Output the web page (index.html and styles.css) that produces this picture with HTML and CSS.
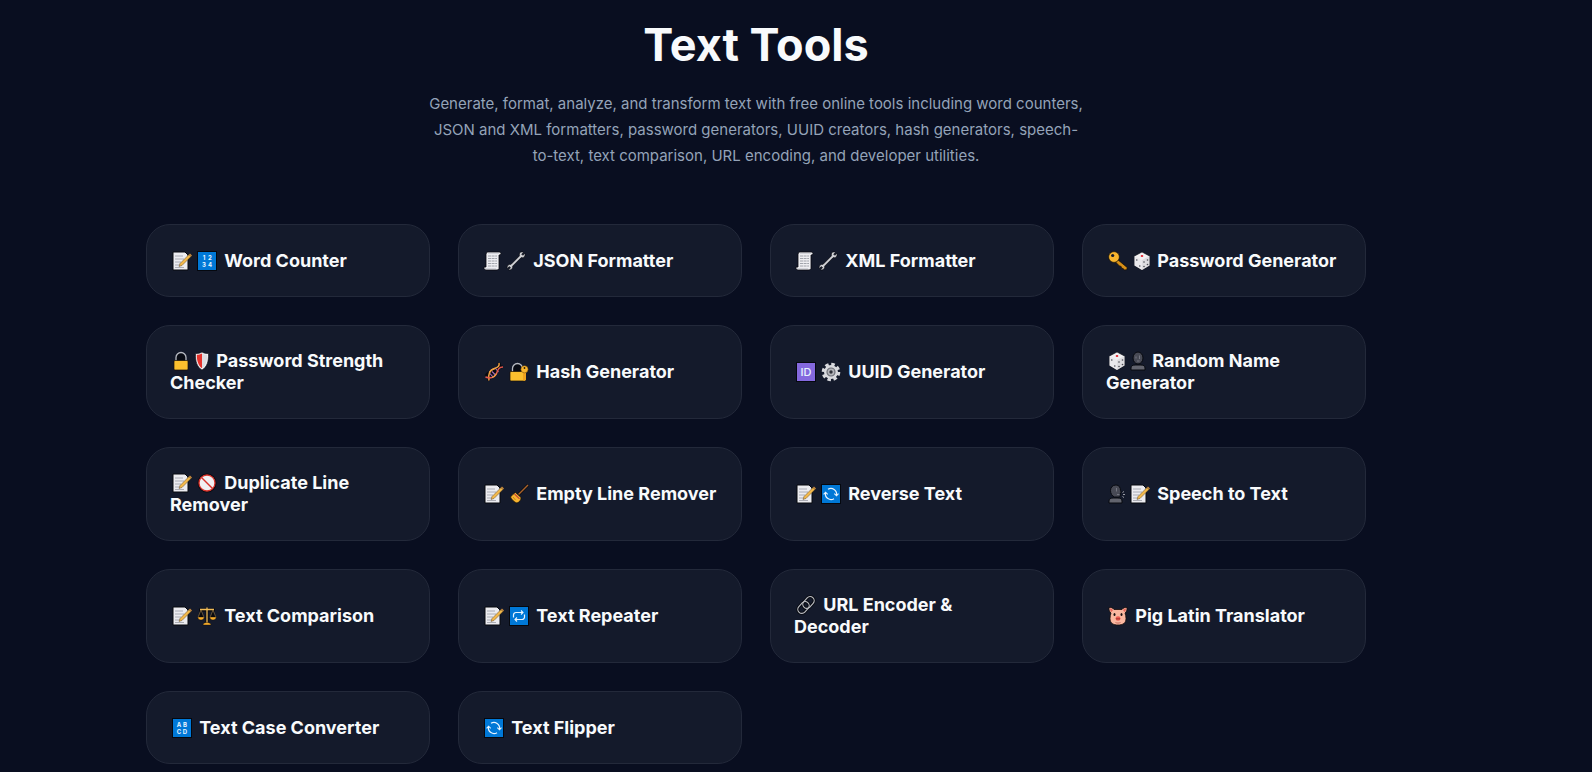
FILE: index.html
```html
<!DOCTYPE html>
<html lang="en">
<head>
    <meta charset="UTF-8">
    <meta name="viewport" content="width=device-width, initial-scale=1.0">
    <title>Text Tools</title>
    <link rel="stylesheet" href="styles.css">
</head>
<body>
    <!-- Icon sprite -->
    <svg class="sprite" aria-hidden="true">
        <symbol id="note" viewBox="0 0 20 20">
            <path d="M1 1h12l3 3v15H1z" fill="#ececf0" stroke="#07090f"/>
            <path d="M3 5h8M3 8h9M3 11h6M3 14h5M3 16.500h9" stroke="#9a9ca5" stroke-width=".8"/>
            <path d="M7 15.500l1-3L17 3.500l2 2L10 14.500z" fill="#f2b84b" stroke="#3a2c14" stroke-width=".4"/>
            <path d="M17 3.500l1-1 2 2-1 1z" fill="#c98a3d"/>
        </symbol>
        <symbol id="numbers" viewBox="0 0 20 20">
            <rect x=".5" y=".5" width="19" height="19" fill="#0078d7" stroke="#05080f"/>
            <text class="glyph" x="7" y="9">1</text>
            <text class="glyph" x="13" y="9">2</text>
            <text class="glyph" x="7" y="16">3</text>
            <text class="glyph" x="13" y="16">4</text>
        </symbol>
        <symbol id="letters" viewBox="0 0 20 20">
            <rect x=".5" y=".5" width="19" height="19" fill="#0078d7" stroke="#05080f"/>
            <text class="glyph" x="7" y="9">A</text>
            <text class="glyph" x="13" y="9">B</text>
            <text class="glyph" x="7" y="16">C</text>
            <text class="glyph" x="13" y="16">D</text>
        </symbol>
        <symbol id="id" viewBox="0 0 20 20">
            <rect x=".5" y=".5" width="19" height="19" fill="#8469de" stroke="#05080f"/>
            <text class="glyph glyph-id" x="10" y="14">ID</text>
        </symbol>
        <symbol id="refresh" viewBox="0 0 20 20">
            <rect x=".5" y=".5" width="19" height="19" fill="#0078d7" stroke="#05080f"/>
            <path d="M7 5.300a5.600 5.600 0 0 1 8.500 5.700M13 14.700a5.600 5.600 0 0 1-8.500-5.700" fill="none" stroke="#e8f4ff" stroke-width="1.200"/>
            <path d="M13.300 9.700l2.200 2 2-2M2.600 10.300l2-2 2.100 2" fill="none" stroke="#e8f4ff" stroke-width="1.100"/>
        </symbol>
        <symbol id="repeat" viewBox="0 0 20 20">
            <rect x=".5" y=".5" width="19" height="19" fill="#0078d7" stroke="#05080f"/>
            <path d="M4.500 11.500V9a2.500 2.500 0 0 1 2.500-2.500h7M15.500 8.500V11a2.500 2.500 0 0 1-2.500 2.500H6" fill="none" stroke="#e8f4ff" stroke-width="1.200"/>
            <path d="M12 4.500l2 2-2 2M8 11.500l-2 2 2 2" fill="none" stroke="#e8f4ff" stroke-width="1.100"/>
        </symbol>
        <symbol id="scroll" viewBox="0 0 20 20">
            <path d="M4 1h13l1 1.500-1 1.500h-1v13.500L14.500 19H2.500L1 17.500V16h2V3z" fill="#eeeef2" stroke="#07090f" stroke-width=".8"/>
            <path d="M5 5h9M5 7.500h9M5 10h9M5 12.500h9M5 15h9" stroke="#8d9099" stroke-width=".8" stroke-dasharray="3 .6"/>
            <path d="M2 17.500h11M5 2.500h11" stroke="#c3c5cc" stroke-width=".6"/>
        </symbol>
        <symbol id="wrench" viewBox="0 0 20 20">
            <path d="M14.500 1.200c1.200-.5 2.400-.3 3 .1L15.700 3.200l1.100 1.100 2-1.900c.5 1 .4 2.500-.6 3.500-1 .9-2.200 1-3 .7l-8.600 8.600c.3.900.1 2-.7 2.800-1 1-2.300 1.200-3.300.7l1.900-1.900-1.200-1.200-1.900 1.900c-.5-1.100-.3-2.400.6-3.300.9-.8 2-1 2.900-.7l8.500-8.600c-.3-1.300 0-3.100 1.100-3.700z" fill="#d2d3d7" stroke="#07090f" stroke-width=".7"/>
        </symbol>
        <symbol id="key" viewBox="0 0 20 20">
            <path d="M9.500 8.500l9.700 8-.4 2.200-2.600.3-1-1.500-1.600-.3-.5-1.800-1.700-.5L7.500 11z" fill="#d89018" stroke="#120d05" stroke-width=".7"/>
            <circle cx="6" cy="6" r="5.400" fill="#f9b62e" stroke="#120d05" stroke-width=".7"/>
            <circle cx="4.700" cy="4.500" r="1.600" fill="#141a2b"/>
        </symbol>
        <symbol id="dice" viewBox="0 0 20 20">
            <path d="M10 1l7.500 4v9.500L10 19l-7.500-4.500V5z" fill="#f1f0f2" stroke="#07090f" stroke-width=".6"/>
            <path d="M10 9v10l7.500-4.500V5z" fill="#dddce0"/>
            <path d="M2.500 5L10 9v10l-7.500-4.500z" fill="#e9e8ec"/>
            <ellipse cx="10" cy="5" rx="1.300" ry="1" fill="#e0242d"/>
            <circle cx="4.800" cy="9" r=".8" fill="#4a4b53"/>
            <circle cx="7.800" cy="15" r=".8" fill="#4a4b53"/>
            <circle cx="12" cy="11" r=".8" fill="#4a4b53"/>
            <circle cx="15.500" cy="9" r=".8" fill="#4a4b53"/>
            <circle cx="12" cy="15.500" r=".8" fill="#4a4b53"/>
            <circle cx="15.500" cy="13.500" r=".8" fill="#4a4b53"/>
        </symbol>
        <symbol id="lock" viewBox="0 0 20 20">
            <path d="M5 10V6.500a5 5 0 0 1 10 0V10" fill="#080b14" stroke="#b7bac2" stroke-width="1.300"/>
            <rect x="3" y="9.500" width="14" height="9.500" rx="1" fill="#fcc02e" stroke="#171006" stroke-width=".7"/>
        </symbol>
        <symbol id="lock-key" viewBox="0 0 20 20">
            <path d="M3.500 10V6.500a5 5 0 0 1 10 0V10" fill="#080b14" stroke="#b7bac2" stroke-width="1.300"/>
            <rect x="1" y="9.500" width="15" height="9.500" rx="1" fill="#fcc02e" stroke="#171006" stroke-width=".7"/>
            <path d="M14 10h3v8l-1.500 1-1.500-1z" fill="#f0a41f"/>
            <circle cx="15.500" cy="7.300" r="3.600" fill="#f9b62e" stroke="#6b4309" stroke-width=".5"/>
            <circle cx="15.500" cy="6" r=".9" fill="#2b1d08"/>
        </symbol>
        <symbol id="shield" viewBox="0 0 20 20">
            <path d="M10 1c2 1.200 4.200 1.600 6.500 1.500.3 8-1.500 13.500-6.500 16.500C5 16 3.200 10.500 3.500 2.500 5.800 2.600 8 2.200 10 1z" fill="#f0f0f3" stroke="#07090f" stroke-width=".6"/>
            <path d="M10 2.500v14.700C6.400 14.500 4.800 10 4.800 3.700c2 0 3.600-.3 5.200-1.200z" fill="#e5322c"/>
            <path d="M10 2.500c1.600.9 3.200 1.200 5.200 1.200 0 6.300-1.600 10.800-5.200 13.500z" fill="#dcdce1"/>
        </symbol>
        <symbol id="dna" viewBox="0 0 20 20">
            <path d="M2 14c3-6 7-1 9.500-4.500S13.500 4 18.500 5" fill="none" stroke="#07090f" stroke-width="3"/>
            <path d="M5 18.500c-1.500-5 1-8.500 5-9s6.500-3 5-8.500" fill="none" stroke="#07090f" stroke-width="3"/>
            <path d="M5.500 11l3.500 4M8 9.500l4 4M11 6l3.500 4" stroke="#a86ab5" stroke-width="1.100"/>
            <path d="M5 18.500C4 13 5.500 8 10.500 6.500 14 5.500 15.800 4 15 1" fill="none" stroke="#f0a043" stroke-width="1.500"/>
            <path d="M1.500 15c4 1.500 8.500 1 11-3.500 1.500-3.500 2-6.500 6.500-6.500" fill="none" stroke="#e2574c" stroke-width="1.500"/>
            <path d="M5.500 10c1.500-2.300 3-3 5-3.500M8 15.500c2-.6 3.500-2 4.500-4" fill="none" stroke="#f0a043" stroke-width="1.300"/>
        </symbol>
        <symbol id="gear" viewBox="0 0 20 20">
            <circle cx="10" cy="10" r="7.800" fill="none" stroke="#d9dade" stroke-width="3" stroke-dasharray="3.500 2.626"/>
            <circle cx="10" cy="10" r="7" fill="#d9dade"/>
            <circle cx="10" cy="10" r="4" fill="#b4b5ba" stroke="#6d6f77" stroke-width="1.200"/>
            <circle cx="10" cy="10" r="1.700" fill="#30323a"/>
        </symbol>
        <symbol id="person" viewBox="0 0 20 20">
            <path d="M3 19v-2c0-2 1.500-3 4-3h6c2.500 0 4 1 4 3v2z" fill="#62646e" stroke="#07090f"/>
            <ellipse cx="10" cy="7" rx="5" ry="6" fill="#484a55" stroke="#07090f"/>
            <path d="M8 5.500v2M11.500 4.500v3.500M9 10h2.500" stroke="#747681"/>
        </symbol>
        <symbol id="speaking" viewBox="0 0 20 20">
            <path d="M2 19v-2c0-2 1.500-3 4-3h5c2.500 0 4 1 4 3v2z" fill="#62646e" stroke="#07090f"/>
            <path d="M9 1c3 0 4.500 2.500 4.500 5.500l.8 2-1 .5v2.500c0 1-1 1.500-2.500 1.500H7.500C5 12 3.500 9.500 3.500 6.500S5.500 1 9 1z" fill="#484a55" stroke="#07090f"/>
            <path d="M9.500 4v3.500M10 10.500h2.500" stroke="#747681"/>
            <path d="M15.500 8.500l1.500-1M16 10.500h2M15.500 12.500l1.500 1" stroke="#9a9ca5"/>
        </symbol>
        <symbol id="forbidden" viewBox="0 0 20 20">
            <circle cx="10" cy="10" r="8.400" fill="#f1f0f3" stroke="#07090f" stroke-width="2"/>
            <circle cx="10" cy="10" r="8" fill="#f1f0f3" stroke="#d8332c" stroke-width="1.300"/>
            <path d="M4.500 4.500l11 11" stroke="#d8332c" stroke-width="1.400"/>
        </symbol>
        <symbol id="broom" viewBox="0 0 20 20">
            <path d="M9.500 10.500L19 1" stroke="#07090f" stroke-width="2.600"/>
            <path d="M9.500 10.500L19 1" stroke="#a9622c" stroke-width="1.500"/>
            <path d="M6.500 8.500l5.500 5c.3 2.500-1.500 4.500-4 5.500-2.500-.5-5.500-3.500-6.500-6 1.500-1.500 3-3.500 5-4.500z" fill="#f7b42f" stroke="#120d05" stroke-width=".7"/>
            <path d="M5.500 10l5 4.800" stroke="#c4453a" stroke-width="1.100"/>
            <path d="M4 13l2.500 3" stroke="#b9761a" stroke-width=".8"/>
        </symbol>
        <symbol id="scales" viewBox="0 0 20 20">
            <path d="M10 2v15M2 4h16" stroke="#07090f" stroke-width="3"/>
            <path d="M4 4L1 11.500h6zM16 4l-3 7.500h6z" fill="#07090f" stroke="#8d7040" stroke-width=".7"/>
            <path d="M10 1.500V17M3 3.500h14" stroke="#f0bb58" stroke-width="1.300"/>
            <path d="M.8 11h6.400c0 2-1.500 3-3.200 3S.8 13 .8 11zM12.800 11h6.400c0 2-1.500 3-3.200 3s-3.200-1-3.200-3zM6 19c0-1.500 1.500-2.500 4-2.500s4 1 4 2.500z" fill="#f8ad2b" stroke="#120d05" stroke-width=".4"/>
        </symbol>
        <symbol id="link" viewBox="0 0 20 20">
            <g fill="none" stroke="#07090f" stroke-width="3">
                <rect x="6" y="3.500" width="13" height="8" rx="4" transform="rotate(-48 12.500 7.500)"/>
                <rect x="1" y="8.500" width="13" height="8" rx="4" transform="rotate(-48 7.500 12.500)"/>
            </g>
            <g fill="none" stroke="#b9bbc2" stroke-width="1.200">
                <rect x="6" y="3.500" width="13" height="8" rx="4" transform="rotate(-48 12.500 7.500)"/>
                <rect x="1" y="8.500" width="13" height="8" rx="4" transform="rotate(-48 7.500 12.500)"/>
            </g>
        </symbol>
        <symbol id="pig" viewBox="0 0 20 20">
            <path d="M1 1.500c2-.3 4 .4 5 2h8c1-1.600 3-2.300 5-2 .2 2.500-.5 4.500-2 5.500.5 1.500 1 3.500 1 5.500 0 4.500-3 6.500-8 6.500s-8-2-8-6.500c0-2 .5-4 1-5.500-1.500-1-2.200-3-2-5.500z" fill="#fbb7a0" stroke="#140b09" stroke-width=".8"/>
            <path d="M2 2.500c1.200 0 2.300.6 3 1.500L3.500 6C2.500 5 2 4 2 2.500zM18 2.500c-1.200 0-2.300.6-3 1.500L16.500 6c1-1 1.500-2 1.500-3.500z" fill="#e5655b"/>
            <ellipse cx="6.500" cy="8.500" rx="1" ry="1.600" fill="#1b1214"/>
            <ellipse cx="13.500" cy="8.500" rx="1" ry="1.600" fill="#1b1214"/>
            <ellipse cx="10" cy="12.500" rx="2.500" ry="2.300" fill="#ee5b52"/>
            <path d="M9 12v1.500M11 12v1.500" stroke="#7a1f1d" stroke-width=".9"/>
            <path d="M7.500 16.500c1.500.8 3.500.8 5 0" fill="none" stroke="#b8594e" stroke-width=".8"/>
        </symbol>
    </svg>

    <main class="container">
        <header class="page-header">
            <h1>Text Tools</h1>
            <p>Generate, format, analyze, and transform text with free online tools including word counters, JSON and XML formatters, password generators, UUID creators, hash generators, speech-to-text, text comparison, URL encoding, and developer utilities.</p>
        </header>

        <nav class="tools-grid" aria-label="Text tools">
            <a class="tool-card" href="#word-counter"><h2><svg class="icon"><use href="#note"/></svg><svg class="icon"><use href="#numbers"/></svg> Word Counter</h2></a>
            <a class="tool-card" href="#json-formatter"><h2><svg class="icon icon-slim"><use href="#scroll"/></svg><svg class="icon"><use href="#wrench"/></svg> JSON Formatter</h2></a>
            <a class="tool-card" href="#xml-formatter"><h2><svg class="icon icon-slim"><use href="#scroll"/></svg><svg class="icon"><use href="#wrench"/></svg> XML Formatter</h2></a>
            <a class="tool-card" href="#password-generator"><h2><svg class="icon"><use href="#key"/></svg><svg class="icon icon-slim"><use href="#dice"/></svg> Password Generator</h2></a>

            <a class="tool-card" href="#password-strength"><h2><svg class="icon icon-slim"><use href="#lock"/></svg><svg class="icon icon-tight"><use href="#shield"/></svg> Password Strength Checker</h2></a>
            <a class="tool-card" href="#hash-generator"><h2><svg class="icon"><use href="#dna"/></svg><svg class="icon"><use href="#lock-key"/></svg> Hash Generator</h2></a>
            <a class="tool-card" href="#uuid-generator"><h2><svg class="icon"><use href="#id"/></svg><svg class="icon"><use href="#gear"/></svg> UUID Generator</h2></a>
            <a class="tool-card" href="#random-name"><h2><svg class="icon icon-slim"><use href="#dice"/></svg><svg class="icon icon-tight"><use href="#person"/></svg> Random Name Generator</h2></a>

            <a class="tool-card" href="#duplicate-line"><h2><svg class="icon"><use href="#note"/></svg><svg class="icon"><use href="#forbidden"/></svg> Duplicate Line Remover</h2></a>
            <a class="tool-card" href="#empty-line"><h2><svg class="icon"><use href="#note"/></svg><svg class="icon"><use href="#broom"/></svg> Empty Line Remover</h2></a>
            <a class="tool-card" href="#reverse-text"><h2><svg class="icon"><use href="#note"/></svg><svg class="icon"><use href="#refresh"/></svg> Reverse Text</h2></a>
            <a class="tool-card" href="#speech-to-text"><h2><svg class="icon icon-slim"><use href="#speaking"/></svg><svg class="icon"><use href="#note"/></svg> Speech to Text</h2></a>

            <a class="tool-card" href="#text-comparison"><h2><svg class="icon"><use href="#note"/></svg><svg class="icon"><use href="#scales"/></svg> Text Comparison</h2></a>
            <a class="tool-card" href="#text-repeater"><h2><svg class="icon"><use href="#note"/></svg><svg class="icon"><use href="#repeat"/></svg> Text Repeater</h2></a>
            <a class="tool-card" href="#url-encoder"><h2><svg class="icon"><use href="#link"/></svg> URL Encoder &amp; Decoder</h2></a>
            <a class="tool-card" href="#pig-latin"><h2><svg class="icon"><use href="#pig"/></svg> Pig Latin Translator</h2></a>

            <a class="tool-card" href="#case-converter"><h2><svg class="icon"><use href="#letters"/></svg> Text Case Converter</h2></a>
            <a class="tool-card" href="#text-flipper"><h2><svg class="icon"><use href="#refresh"/></svg> Text Flipper</h2></a>
        </nav>
    </main>
</body>
</html>
```
FILE: styles.css
```css
* {
    box-sizing: border-box;
}

body {
    font-family: Inter, "Liberation Sans", sans-serif;
    margin: 0;
    padding: 0 80px 0 0;
    background-color: #090e20;
    color: #f8fafc;
}

.sprite {
    display: none;
}

.container {
    max-width: 1220px;
    margin: 0 auto;
    padding: 16px 0 8px;
}

.page-header {
    text-align: center;
    margin-bottom: 55px;
}

.page-header h1 {
    margin: 0 0 17px;
    font-size: 45px;
    line-height: 58px;
    font-weight: 700;
}

.page-header p {
    max-width: 660px;
    margin: 0 auto;
    color: #94a3b8;
    font-size: 15px;
    line-height: 26px;
}

.tools-grid {
    display: grid;
    grid-template-columns: repeat(4, 1fr);
    gap: 28px;
}

.tool-card {
    display: flex;
    align-items: center;
    min-height: 73px;
    padding: 24px 23px;
    background-color: #141a2b;
    border: 1px solid #23293a;
    border-radius: 24px;
    color: #f8fafc;
    text-decoration: none;
}

.tool-card:hover {
    border-color: #3b82f6;
}

.tool-card h2 {
    margin: 0;
    font-size: 18px;
    line-height: 22px;
    font-weight: 700;
}

.icon {
    width: 20px;
    height: 20px;
    margin: 0 3px 0 2px;
    vertical-align: -4px;
}

.icon-slim {
    margin: 0 1px;
}

.icon-tight {
    margin: 0;
}

.glyph {
    fill: #e8f4ff;
    font-size: 6px;
    font-weight: 700;
    text-anchor: middle;
}

.glyph-id {
    font-size: 11px;
    font-weight: 500;
}
```
